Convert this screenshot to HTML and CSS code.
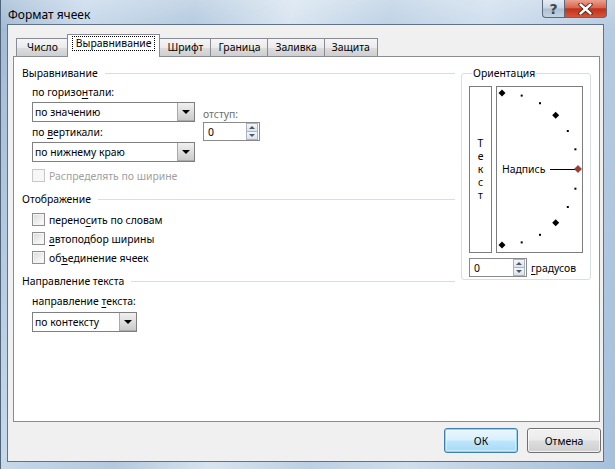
FILE: index.html
```html
<!DOCTYPE html>
<html lang="ru">
<head>
<meta charset="utf-8">
<title>Формат ячеек</title>
<link rel="stylesheet" href="styles.css">
</head>
<body>
<div class="window">
  <div class="titlebar">
    <span class="title">Формат ячеек</span>
    <div class="caption-btns">
      <div class="cap cap-help">?</div>
      <div class="cap cap-close">
        <svg width="15" height="12" viewBox="0 0 15 12"><path d="M2.5 1.5 L12.5 10.5 M12.5 1.5 L2.5 10.5" stroke="#4a1a12" stroke-width="4.2" stroke-linecap="round"/><path d="M2.5 1.5 L12.5 10.5 M12.5 1.5 L2.5 10.5" stroke="#ffffff" stroke-width="2.4" stroke-linecap="round"/></svg>
      </div>
    </div>
  </div>
  <div class="client">
    <div class="tabs">
      <div class="tab">Число</div>
      <div class="tab active"><span class="focus">Выравнивание</span></div>
      <div class="tab">Шрифт</div>
      <div class="tab">Граница</div>
      <div class="tab">Заливка</div>
      <div class="tab">Защита</div>
    </div>
    <div class="panel">
      <div class="left">
        <div class="group-head"><span>Выравнивание</span><i></i></div>
        <div class="align-row">
          <div class="align-col">
            <div class="lbl">по горизо<u>н</u>тали:</div>
            <div class="combo wide"><span>по значению</span><b class="drop"><em></em></b></div>
            <div class="lbl gap">по <u>в</u>ертикали:</div>
            <div class="combo wide"><span>по нижнему краю</span><b class="drop"><em></em></b></div>
          </div>
          <div class="indent-col">
            <div class="lbl muted">отступ:</div>
            <div class="spin"><span>0</span><div class="spin-btns"><b class="up"></b><b class="down"></b></div></div>
          </div>
        </div>
        <div class="check disabled first-check"><i class="box"></i><span>Распределять по ширине</span></div>

        <div class="group-head sec"><span>Отображение</span><i></i></div>
        <div class="checks">
          <div class="check"><i class="box"></i><span>перено<u>с</u>ить по словам</span></div>
          <div class="check"><i class="box"></i><span><u>а</u>втоподбор ширины</span></div>
          <div class="check"><i class="box"></i><span>об<u>ъ</u>единение ячеек</span></div>
        </div>

        <div class="group-head sec"><span>Направление текста</span><i></i></div>
        <div class="lbl dir-lbl">направление <u>т</u>екста:</div>
        <div class="combo narrow"><span>по контексту</span><b class="drop"><em></em></b></div>
      </div>

      <fieldset class="orient">
        <legend>Ориентация</legend>
        <div class="dial-row">
          <div class="vtext"><span>Т</span><span>е</span><span>к</span><span>с</span><span>т</span></div>
          <div class="dial">
            <svg width="85" height="165" viewBox="0 0 85 165">
              <g fill="#000">
                <polygon points="5,2.5 8.5,6 5,9.5 1.5,6"/>
                <rect x="23.7" y="7.6" width="2" height="2"/>
                <rect x="42" y="15.2" width="2" height="2"/>
                <polygon points="58.7,24.8 62.2,28.3 58.7,31.8 55.2,28.3"/>
                <rect x="69.8" y="43" width="2" height="2"/>
                <rect x="77.4" y="61.3" width="2" height="2"/>
                <rect x="77.4" y="100.7" width="2" height="2"/>
                <rect x="69.8" y="119" width="2" height="2"/>
                <polygon points="58.7,132.2 62.2,135.7 58.7,139.2 55.2,135.7"/>
                <rect x="42" y="146.8" width="2" height="2"/>
                <rect x="23.7" y="154.4" width="2" height="2"/>
                <polygon points="5,154.5 8.5,158 5,161.5 1.5,158"/>
              </g>
              <line x1="53" y1="82.5" x2="78" y2="82.5" stroke="#000" stroke-width="1"/>
              <polygon points="81,78.5 84.5,82 81,85.5 77.5,82" fill="#a23a32" stroke="#6b1d18" stroke-width="0.6"/>
            </svg>
            <span class="caption">Надпись</span>
          </div>
        </div>
        <div class="deg-row">
          <div class="spin deg"><span>0</span><div class="spin-btns"><b class="up"></b><b class="down"></b></div></div>
          <span class="deg-lbl"><u>г</u>радусов</span>
        </div>
      </fieldset>
    </div>
    <div class="buttons">
      <div class="btn default">ОК</div>
      <div class="btn">Отмена</div>
    </div>
  </div>
</div>
</body>
</html>
```

FILE: styles.css
```css
* { box-sizing: border-box; }
html, body { margin: 0; padding: 0; }
body {
  width: 615px;
  height: 469px;
  overflow: hidden;
  font-family: "Noto Sans", "Open Sans", sans-serif;
  font-size: 10.4px;
  color: #000;
  background: #b9cfe4;
}
u { text-decoration: underline; text-underline-offset: 2px; }

.window {
  width: 615px;
  height: 469px;
  display: flex;
  flex-direction: column;
  background:
    linear-gradient(180deg, rgba(255,255,255,0.25) 0%, rgba(255,255,255,0) 30px),
    linear-gradient(100deg, #9fb9d4 0%, #c6d8ea 12%, #b3c9df 28%, #d7e4f0 42%, #bcd0e4 56%, #cfdeed 70%, #b8cde2 86%, #a5c0dc 100%);
  border-left: 1px solid #50647a;
}

.titlebar {
  height: 24px;
  flex: none;
  display: flex;
  align-items: flex-start;
  padding: 0 8px 0 7px;
}
.title {
  margin-top: 8px;
  line-height: 14px;
  font-size: 12px;
  color: #000;
}
.caption-btns {
  margin-left: auto;
  display: flex;
}
.cap {
  height: 18px;
  border: 1px solid #5a6a7c;
  border-top: none;
  display: flex;
  align-items: center;
  justify-content: center;
}
.cap-help {
  width: 22px;
  border-radius: 0 0 0 4px;
  border-right: none;
  background: linear-gradient(180deg, #e4ecf4 0%, #c9d6e3 48%, #aebfd1 52%, #c4d3e2 100%);
  color: #3a4756;
  font-size: 14px;
  font-weight: bold;
  line-height: 16px;
  font-family: "DejaVu Sans", sans-serif;
}
.cap-close {
  width: 43px;
  border-radius: 0 0 4px 0;
  background: linear-gradient(180deg, #eba08e 0%, #d8664f 45%, #c0311a 52%, #d4553a 100%);
}

.client {
  flex: 1;
  margin: 0 11px 7px 6px;
  border: 1px solid #5f7287;
  background: #f0f0f0;
  display: flex;
  flex-direction: column;
}

.tabs {
  display: flex;
  align-items: flex-end;
  margin: 9px 0 0 8px;
  height: 22px;
  position: relative;
  z-index: 2;
}
.tab {
  height: 18px;
  padding: 0 7px;
  border: 1px solid #898c95;
  border-bottom: none;
  border-left: none;
  background: linear-gradient(180deg, #f5f5f5 0%, #ebebeb 50%, #dddddd 51%, #cfcfcf 100%);
  line-height: 17px;
  white-space: nowrap;
}
.tab:first-child { border-left: 1px solid #898c95; padding-left: 10px; padding-right: 10px; }
.tab.active {
  height: 23px;
  margin: 0 -1px -1px -2px;
  padding: 0 4px 0 4px;
  border-left: 1px solid #898c95;
  background: #fff;
  position: relative;
  z-index: 3;
}
.tab.active + .tab { border-left: none; padding-left: 8px; }
.focus {
  display: inline-block;
  margin-top: 1px;
  padding: 0 3px;
  line-height: 13px;
  border: 1px dotted #000;
}

.panel {
  margin-left: 5px;
  width: 587px;
  height: 366px;
  border: 1px solid #898c95;
  background: #fff;
  display: flex;
  align-items: flex-start;
  padding-left: 8px;
  position: relative;
  z-index: 1;
}

.left {
  width: 433px;
  padding-top: 9px;
  display: flex;
  flex-direction: column;
}
.group-head {
  display: flex;
  align-items: center;
  height: 14px;
  line-height: 14px;
}
.group-head i {
  flex: 1;
  height: 1px;
  background: #d5dfe5;
  margin-left: 7px;
}
.group-head.sec { margin-top: 7px; }

.lbl { line-height: 14px; height: 14px; white-space: nowrap; }
.lbl.muted { color: #6d6d6d; }

.align-row {
  display: flex;
  margin-top: 5px;
  padding-left: 10px;
}
.align-col { width: 163px; display: flex; flex-direction: column; }
.align-col .combo { margin-top: 3px; }
.align-col .lbl.gap { margin-top: 3px; }
.indent-col { margin-left: 8px; padding-top: 22px; display: flex; flex-direction: column; }
.indent-col .spin { margin-top: 1px; }

.combo {
  height: 20px;
  border: 1px solid #7f7f7f;
  background: #fff;
  display: flex;
  align-items: center;
  justify-content: space-between;
  padding-left: 2px;
  white-space: nowrap;
}
.combo.wide { width: 163px; }
.combo.narrow { width: 105px; margin-left: 10px; margin-top: 4px; }
.drop {
  width: 17px;
  height: 18px;
  border: 1px solid #a9a9a9;
  border-right: none;
  border-top: none;
  background: linear-gradient(180deg, #f0f0f0 0%, #dedede 50%, #cbcbcb 100%);
  display: flex;
  align-items: center;
  justify-content: center;
}
.drop em {
  width: 0;
  height: 0;
  border-left: 4px solid transparent;
  border-right: 4px solid transparent;
  border-top: 4px solid #000;
}

.spin {
  width: 57px;
  height: 19px;
  border: 1px solid #8a8a8a;
  background: #fff;
  display: flex;
  align-items: center;
  justify-content: space-between;
  padding-left: 4px;
}
.spin-btns {
  width: 12px;
  height: 17px;
  display: flex;
  flex-direction: column;
  margin-right: 1px;
}
.spin-btns b {
  flex: 1;
  border: 1px solid #a8b4c2;
  background: linear-gradient(180deg, #f4f7fa 0%, #dbe2ea 100%);
  display: flex;
  align-items: center;
  justify-content: center;
}
.spin-btns b + b { border-top: none; }
.spin-btns .up::after {
  content: "";
  border-left: 3px solid transparent;
  border-right: 3px solid transparent;
  border-bottom: 3px solid #4d5865;
}
.spin-btns .down::after {
  content: "";
  border-left: 3px solid transparent;
  border-right: 3px solid transparent;
  border-top: 3px solid #4d5865;
}

.check {
  display: flex;
  align-items: center;
  height: 19px;
  padding-left: 10px;
  white-space: nowrap;
}
.check .box {
  width: 13px;
  height: 13px;
  border: 1px solid #8e8f8f;
  background: linear-gradient(135deg, #d9dadb 0%, #eeeeee 55%, #ffffff 100%);
  box-shadow: inset 0 0 0 1px #f4f4f4;
  margin-right: 4px;
  flex: none;
}
.check.disabled { color: #a0a0a0; }
.check.disabled .box { border-color: #c8c8c8; background: #f7f7f7; box-shadow: none; }
.first-check { margin-top: 4px; }
.checks { margin-top: 4px; display: flex; flex-direction: column; }

.dir-lbl { margin-top: 6px; padding-left: 10px; }

.orient {
  margin: 9px 0 0 6px;
  width: 130px;
  padding: 0 0 2px 7px;
  border: 1px solid #d5dfe5;
  border-radius: 3px;
}
.orient legend {
  margin-left: 3px;
  padding: 0 1px;
  line-height: 14px;
}
.dial-row {
  display: flex;
  margin-top: 6px;
}
.vtext {
  width: 23px;
  height: 167px;
  border: 1px solid #7d7d7d;
  display: flex;
  flex-direction: column;
  align-items: center;
  justify-content: center;
}
.vtext span { display: block; height: 13px; line-height: 13px; }
.dial {
  margin-left: 4px;
  width: 87px;
  height: 167px;
  border: 1px solid #7d7d7d;
  position: relative;
}
.dial svg { display: block; }
.caption {
  position: absolute;
  left: 5px;
  top: 75px;
  line-height: 14px;
  white-space: nowrap;
}
.deg-row {
  display: flex;
  align-items: center;
  margin-top: 5px;
}
.spin.deg { width: 58px; }
.deg-lbl { margin-left: 4px; }

.buttons {
  display: flex;
  justify-content: flex-end;
  gap: 9px;
  margin: 6px 2px 0 0;
}
.btn {
  width: 74px;
  height: 25px;
  border: 1px solid #707070;
  border-radius: 3px;
  background: linear-gradient(180deg, #f2f2f2 0%, #ebebeb 48%, #dddddd 52%, #cfcfcf 100%);
  display: flex;
  align-items: center;
  justify-content: center;
  box-shadow: inset 0 0 0 1px rgba(255,255,255,0.7);
}
.btn.default {
  border-color: #3c7fb1;
  box-shadow: inset 0 0 0 1px #98d1ef, inset 0 0 0 2px rgba(255,255,255,0.4);
  background: linear-gradient(180deg, #eaf6fd 0%, #d9f0fc 48%, #bee6fd 52%, #a7d9f5 100%);
}
```
